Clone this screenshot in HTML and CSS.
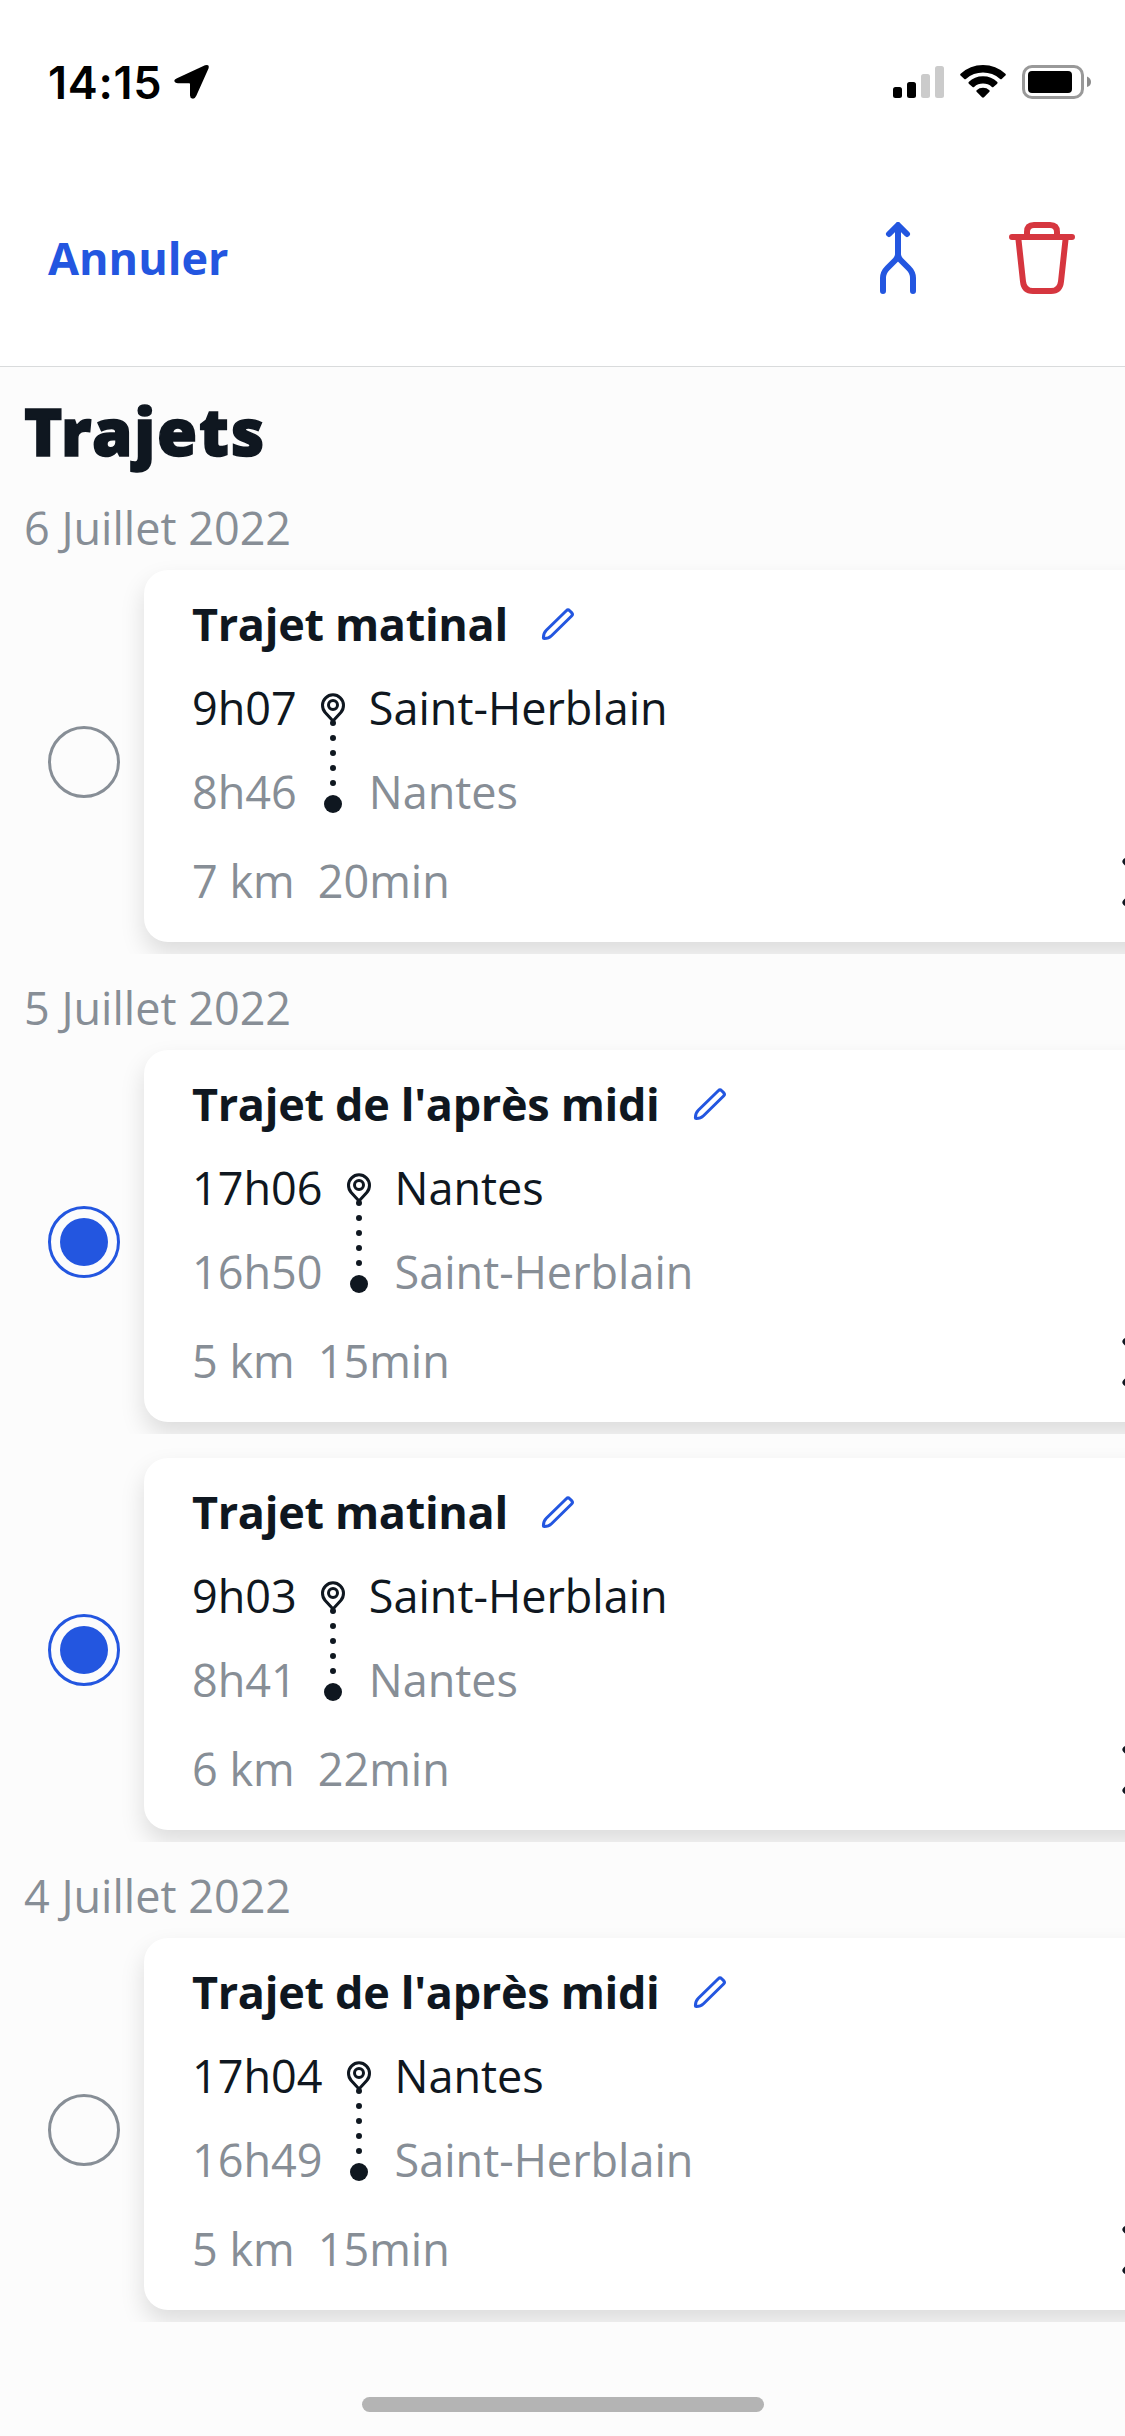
FILE: index.html
```html
<!DOCTYPE html>
<html lang="fr">
<head>
<meta charset="utf-8">
<title>Trajets</title>
<link rel="stylesheet" href="styles.css">
</head>
<body>
<svg class="defs" width="0" height="0" aria-hidden="true">
  <symbol id="pencil" viewBox="0 0 36 36">
    <path d="M26.300 4.700Q28 3 29.700 4.700L31.600 6.600Q33.300 8.300 31.600 10L11.500 29.700Q8.600 32.600 4.400 32.600Q3.400 32.600 3.400 31.600Q3.400 27.200 6.300 24.300Z"/>
  </symbol>
  <symbol id="route" viewBox="0 0 48 168">
    <path class="line" d="M24 55L16.200 46.400A10.500 10.500 0 1 1 31.800 46.400Z"/>
    <circle class="line" cx="24" cy="39" r="4.500"/>
    <path class="dots" d="M24 57V118"/>
    <circle cx="24" cy="138" r="9"/>
  </symbol>
  <symbol id="chevron" viewBox="0 0 28 48">
    <path d="M4 3.500L24 24L4 44.500"/>
  </symbol>
</svg>
<div class="screen">
  <header class="header">
    <div class="status">
      <div class="status-side">
        <span class="clock">14:15</span>
        <svg width="36" height="36" viewBox="0 0 36 36"><path d="M3 14.200L31 1.300Q35.800 0 34.500 4.500L22.300 31.800Q21 35 18.400 34.600Q16 34 16 31.500V20Q16 19.300 15.200 19.300H4Q.6 19.100 .3 16.800Q.2 15.200 3 14.200Z"/></svg>
      </div>
      <div class="status-side icons">
        <svg width="51" height="36" viewBox="0 0 51 36">
          <rect x="0" y="23" width="9" height="11" rx="2.500"/><rect x="14" y="18" width="9" height="16" rx="2.500"/>
          <g fill="#cbcbcb"><rect x="28" y="10" width="9" height="24" rx="2.500"/><rect x="42" y="2" width="9" height="32" rx="2.500"/></g>
        </svg>
        <svg width="46" height="36" viewBox="0 0 46 36">
          <path d="M.6 9.800Q10 1 23 1T45.400 9.800Q46.300 10.700 45.400 11.600L41.700 15Q41 15.700 40.100 14.900Q32.500 8.500 23 8.500T5.900 14.900Q5 15.700 4.300 15L.6 11.600Q-.3 10.700 .6 9.800Z"/>
          <path d="M8.700 18Q14.500 12.300 23 12.300T37.300 18Q38 18.900 37.200 19.700L33.400 23Q32.700 23.600 31.900 22.900Q28 19.600 23 19.600T14.100 22.900Q13.300 23.600 12.600 23L8.800 19.700Q8 18.900 8.700 18Z"/>
          <path d="M16.600 26.200Q19.200 23.800 23 23.800T29.400 26.200Q30 26.900 29.400 27.700L24 33.300Q23 34.200 22 33.300L16.600 27.700Q16 26.900 16.600 26.200Z"/>
        </svg>
        <svg width="69" height="36" viewBox="0 0 69 36">
          <rect x="1.500" y="2.500" width="59" height="31" rx="8.500" fill="none" stroke="#999" stroke-width="3"/>
          <rect x="6" y="7" width="44" height="22" rx="4"/>
          <path d="M65 12.500Q69 14 69 18T65 23Z" fill="#8c8c8c"/>
        </svg>
      </div>
    </div>
    <nav class="nav">
      <span class="cancel">Annuler</span>
      <div class="actions">
        <svg class="merge" width="36" height="72" viewBox="0 0 36 72"><path d="M9 12L18 3L27 12M18 4V32Q18 35.500 15.500 38L7.500 46Q3 50.500 3 56V69M18 32Q18 35.500 20.500 38L28.500 46Q33 50.500 33 56V69"/></svg>
        <svg class="trash" width="66" height="72" viewBox="0 0 66 72"><path d="M3 15H63M18 15V10Q18 3 25 3H41Q48 3 48 10V15M9.300 16L14 59.500Q15 69 24 69H42Q51 69 52 59.500L56.700 16"/></svg>
      </div>
    </nav>
  </header>
  <main class="list">
    <h1 class="title">Trajets</h1>

    <h2 class="date">6 Juillet 2022</h2>
    <div class="trip">
      <span class="radio"></span>
      <article class="card">
        <h3 class="name">Trajet matinal <svg class="pencil"><use href="#pencil"/></svg></h3>
        <div class="steps">
          <div class="stack"><span>9h07</span><span class="muted">8h46</span></div>
          <svg class="route"><use href="#route"/></svg>
          <div class="stack"><span>Saint-Herblain</span><span class="muted">Nantes</span></div>
        </div>
        <div class="meta"><span>7 km</span><span>20min</span><svg class="chevron"><use href="#chevron"/></svg></div>
      </article>
    </div>

    <h2 class="date">5 Juillet 2022</h2>
    <div class="trip">
      <span class="radio checked"></span>
      <article class="card">
        <h3 class="name">Trajet de l'après midi <svg class="pencil"><use href="#pencil"/></svg></h3>
        <div class="steps">
          <div class="stack"><span>17h06</span><span class="muted">16h50</span></div>
          <svg class="route"><use href="#route"/></svg>
          <div class="stack"><span>Nantes</span><span class="muted">Saint-Herblain</span></div>
        </div>
        <div class="meta"><span>5 km</span><span>15min</span><svg class="chevron"><use href="#chevron"/></svg></div>
      </article>
    </div>
    <div class="trip">
      <span class="radio checked"></span>
      <article class="card">
        <h3 class="name">Trajet matinal <svg class="pencil"><use href="#pencil"/></svg></h3>
        <div class="steps">
          <div class="stack"><span>9h03</span><span class="muted">8h41</span></div>
          <svg class="route"><use href="#route"/></svg>
          <div class="stack"><span>Saint-Herblain</span><span class="muted">Nantes</span></div>
        </div>
        <div class="meta"><span>6 km</span><span>22min</span><svg class="chevron"><use href="#chevron"/></svg></div>
      </article>
    </div>

    <h2 class="date">4 Juillet 2022</h2>
    <div class="trip">
      <span class="radio"></span>
      <article class="card">
        <h3 class="name">Trajet de l'après midi <svg class="pencil"><use href="#pencil"/></svg></h3>
        <div class="steps">
          <div class="stack"><span>17h04</span><span class="muted">16h49</span></div>
          <svg class="route"><use href="#route"/></svg>
          <div class="stack"><span>Nantes</span><span class="muted">Saint-Herblain</span></div>
        </div>
        <div class="meta"><span>5 km</span><span>15min</span><svg class="chevron"><use href="#chevron"/></svg></div>
      </article>
    </div>
  </main>
  <div class="home-indicator"></div>
</div>
</body>
</html>
```
FILE: styles.css
```css
* { box-sizing: border-box; }
body {
  margin: 0;
  font: 45px/61px "Open Sans", "Noto Sans", sans-serif;
  color: #0f1720;
}
.defs { display: block; }
svg { flex: none; }
h1, h2, h3 { margin: 0; font-weight: 400; }

.screen {
  width: 1125px;
  height: 2436px;
  overflow: hidden;
  background: #fcfcfc;
  display: flex;
  flex-direction: column;
}

.header { background: #fff; border-bottom: 1px solid #d9dbdc; }
.status {
  height: 150px;
  padding: 64px 34px 0 48px;
  display: flex;
  justify-content: space-between;
  color: #000;
}
.status-side { display: flex; height: 36px; align-items: center; gap: 14px; }
.status-side.icons { gap: 16px; }
.clock {
  width: 112px;
  margin-top: 2px;
  font: 600 45px/36px Inter, sans-serif;
  letter-spacing: .7px;
  white-space: nowrap;
}
.nav {
  height: 216px;
  padding: 0 50px 0 48px;
  display: flex;
  align-items: center;
  justify-content: space-between;
}
.cancel { color: #2356e0; font-weight: 700; padding-bottom: 2px; }
.actions { display: flex; gap: 93px; }
.actions path { fill: none; stroke-width: 6; stroke-linecap: round; stroke-linejoin: round; }
.merge { stroke: #2356e0; }
.trash { stroke: #d6363f; }

.list { flex: 1; }
.title {
  height: 107px;
  padding: 19px 24px 0;
  font-family: "Noto Sans", sans-serif;
  font-size: 65px;
  line-height: 90px;
  font-weight: 900;
  letter-spacing: 1.8px;
  -webkit-text-stroke: 1.5px #0f1720;
}
.date { height: 72px; padding: 23px 24px 0; color: #878e96; font-size: 45px; }
.muted, .meta { color: #878e96; }

/* The card shadow is cut at the bottom edge of its row. */
.trip {
  margin-top: 24px;
  height: 384px;
  padding-left: 48px;
  display: flex;
  align-items: center;
  gap: 24px;
  clip-path: inset(-24px 0 0 0);
}
.radio {
  flex: none;
  width: 72px;
  height: 72px;
  border: 3px solid #878e96;
  border-radius: 50%;
  display: grid;
  place-items: center;
}
.radio.checked { border-color: #2356e0; }
.radio.checked::after {
  content: "";
  width: 48px;
  height: 48px;
  border-radius: 50%;
  background: #2356e0;
}
.card {
  flex: none;
  width: 1050px;
  height: 372px;
  margin-bottom: 12px;
  padding: 23px 48px 0;
  border-radius: 24px;
  background: #fff;
  box-shadow: 0 12px 24px rgba(0, 0, 0, .13);
}
.name {
  display: flex;
  align-items: center;
  gap: 32px;
  height: 61px;
  font-size: 45px;
  font-weight: 700;
  letter-spacing: -.32px;
}
.pencil { width: 36px; height: 36px; fill: none; stroke: #2356e0; stroke-width: 3; }
.steps { display: flex; gap: 12px; margin-top: 12px; }
.stack { display: flex; flex-direction: column; line-height: 84px; }
.route { width: 48px; height: 168px; fill: #0f1720; }
.line { fill: none; stroke: #0f1720; stroke-width: 3; stroke-linejoin: round; }
.dots { stroke: #0f1720; stroke-width: 6; stroke-linecap: round; stroke-dasharray: 0 15; }
.meta { display: flex; align-items: center; gap: 23px; margin-top: 16px; }
.chevron {
  width: 28px;
  height: 48px;
  margin-left: auto;
  margin-right: -4px;
  margin-top: 2px;
  fill: none;
  stroke: #0f1720;
  stroke-width: 7;
  stroke-linecap: round;
  stroke-linejoin: round;
}

.home-indicator {
  align-self: center;
  width: 402px;
  height: 15px;
  margin-bottom: 24px;
  border-radius: 8px;
  background: #b4b4b4;
}
```
